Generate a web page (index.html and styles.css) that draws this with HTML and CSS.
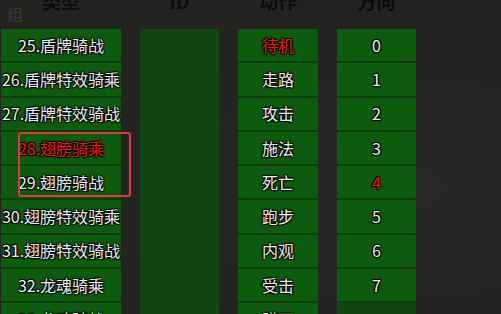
FILE: index.html
```html
<!DOCTYPE html>
<html lang="zh">
<head>
<meta charset="utf-8">
<link rel="stylesheet" href="styles.css">
</head>
<body>
<div class="page">
  <div class="heads">
    <div class="head w1"><span class="side">组</span>类型</div>
    <div class="head w2">ID</div>
    <div class="head w3">动作</div>
    <div class="head w4">方向</div>
  </div>
  <div class="cols">
    <div class="col w1">
      <div class="row">25.盾牌骑战</div>
      <div class="row">26.盾牌特效骑乘</div>
      <div class="row">27.盾牌特效骑战</div>
      <div class="row red">28.翅膀骑乘</div>
      <div class="row">29.翅膀骑战</div>
      <div class="row">30.翅膀特效骑乘</div>
      <div class="row">31.翅膀特效骑战</div>
      <div class="row">32.龙魂骑乘</div>
      <div class="row">33.龙魂骑战</div>
      <div class="mark"></div>
    </div>
    <div class="col w2 dark"></div>
    <div class="col w3">
      <div class="row red">待机</div>
      <div class="row">走路</div>
      <div class="row">攻击</div>
      <div class="row">施法</div>
      <div class="row">死亡</div>
      <div class="row">跑步</div>
      <div class="row">内观</div>
      <div class="row">受击</div>
      <div class="row">蹲下</div>
    </div>
    <div class="col w4">
      <div class="row">0</div>
      <div class="row">1</div>
      <div class="row">2</div>
      <div class="row">3</div>
      <div class="row red">4</div>
      <div class="row">5</div>
      <div class="row">6</div>
      <div class="row">7</div>
      <div class="rest"></div>
    </div>
  </div>
</div>
</body>
</html>
```

FILE: styles.css
```css
html, body {
  margin: 0;
  padding: 0;
}
body {
  width: 501px;
  height: 314px;
  overflow: hidden;
  background: #232322;
  font-family: "Noto Sans CJK SC", "Noto Sans", sans-serif;
}
.page {
  height: 314px;
  overflow: hidden;
  background:
    radial-gradient(ellipse at 80% 60%, rgba(255,255,255,0.025), transparent 60%),
    #232322;
}
.heads {
  display: flex;
  gap: 19px;
  padding-left: 1px;
  height: 29px;
}
.head {
  position: relative;
  box-sizing: border-box;
  text-align: center;
  font-size: 19px;
  font-weight: 700;
  line-height: 20px;
  color: #0c0c0c;
  margin-top: -9px;
  height: 38px;
}
.side {
  position: absolute;
  left: 6px;
  top: 13px;
  font-size: 16px;
  font-weight: 400;
  color: #3b3b3a;
}
.w1 { width: 120px; }
.w2 { width: 79px; }
.w3 { width: 80px; }
.w4 { width: 79px; }
.cols {
  display: flex;
  gap: 19px;
  padding-left: 1px;
}
.col {
  position: relative;
  display: flex;
  flex-direction: column;
  height: 290px;
  background: #0d5c0d;
}
.col.dark {
  background: #0f4611;
}
.row {
  flex: none;
  height: 34.3px;
  box-sizing: border-box;
  border-bottom: 2px solid #0a3d0b;
  display: flex;
  align-items: center;
  justify-content: center;
  padding-bottom: 1px;
  font-size: 16px;
  color: #ededed;
  white-space: nowrap;
  text-shadow: 1px 1px 1px #000, -1px -1px 1px #000, 1px -1px 1px #000, -1px 1px 1px #000;
}
.row.red {
  color: #f21414;
}
.rest {
  flex: 1;
  background: #0f4611;
}
.mark {
  position: absolute;
  left: 17px;
  top: 103px;
  width: 113px;
  height: 65px;
  box-sizing: border-box;
  border: 2px solid #e23a3a;
  border-radius: 3px;
}
```
